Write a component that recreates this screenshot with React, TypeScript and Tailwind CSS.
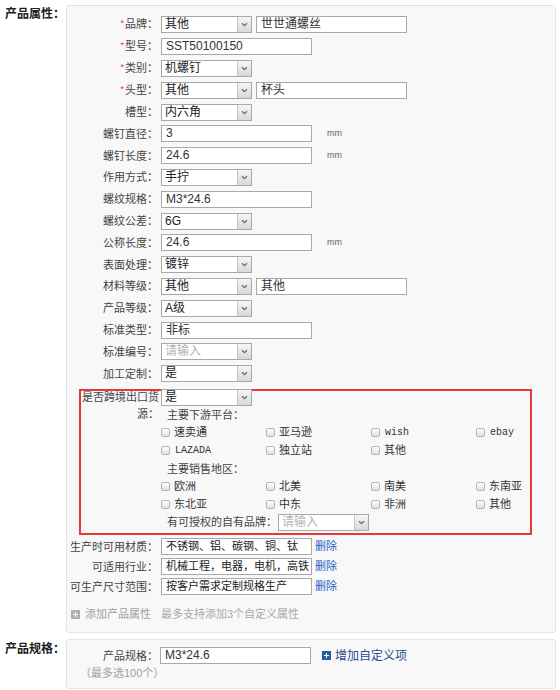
import React from "react";

const Chevron = () => (
  <svg width="7" height="5" viewBox="0 0 7 5">
    <path d="M1 1.2 L3.5 3.6 L6 1.2" fill="none" stroke="#6b6b6b" strokeWidth="1.3" />
  </svg>
);

function Sel({ value, placeholder }: { value: string; placeholder?: boolean }) {
  return (
    <div className="flex h-[17px] w-[91px] shrink-0 items-stretch border border-[#a8a8a8] bg-white">
      <span
        className={
          placeholder
            ? "flex-1 pl-[3px] text-[12px] leading-[15px] text-[#b3b3b3] whitespace-nowrap overflow-hidden"
            : "flex-1 pl-[3px] text-[12px] leading-[15px] text-[#222] whitespace-nowrap overflow-hidden"
        }
      >
        {value}
      </span>
      <span className="flex w-[14px] items-center justify-center border-l border-[#c4c4c4] bg-gradient-to-b from-[#f6f6f6] to-[#d8d8d8]">
        <Chevron />
      </span>
    </div>
  );
}

function Inp({ value, small }: { value: string; small?: boolean }) {
  return (
    <div
      className={
        small
          ? "h-[17px] w-[151px] shrink-0 overflow-hidden whitespace-nowrap border border-[#a8a8a8] bg-white pl-[4px] text-[11px] leading-[15px] text-[#222]"
          : "h-[17px] w-[151px] shrink-0 overflow-hidden whitespace-nowrap border border-[#a8a8a8] bg-white pl-[4px] text-[12px] leading-[15px] text-[#333]"
      }
    >
      {value}
    </div>
  );
}

function Row({ label, req, children }: { label: string; req?: boolean; children: React.ReactNode }) {
  return (
    <div className="flex h-[21.8px] items-center">
      <div className="w-[91px] shrink-0 text-right text-[11px] leading-[14px] text-[#444]">
        {req && <span className="relative top-[-2px] mr-[1px] text-[9px] text-[#e4393c]">*</span>}
        {label}：
      </div>
      <div className="ml-[3px] flex items-center">{children}</div>
    </div>
  );
}

const Mm = () => <span className="ml-[15px] text-[9px] text-[#666]">mm</span>;

function Cb({ label, latin }: { label: string; latin?: boolean }) {
  return (
    <div className="flex h-[18px] items-center">
      <span className="h-[9px] w-[9px] rounded-[2px] border border-[#b5b5b5] bg-gradient-to-b from-white to-[#e0e0e0]" />
      {latin ? (
        <span className="ml-[5px] font-['Liberation_Mono',monospace] text-[10px] text-[#333]">{label}</span>
      ) : (
        <span className="ml-[4px] text-[11px] text-[#333]">{label}</span>
      )}
    </div>
  );
}

function DelRow({ label, value }: { label: string; value: string }) {
  return (
    <div className="flex h-[20px] items-center">
      <div className="w-[91px] shrink-0 text-right text-[11px] leading-[14px] text-[#444]">{label}：</div>
      <div className="ml-[3px] flex items-center">
        <Inp value={value} small />
        <span className="ml-[3px] text-[11px] text-[#2a62c9]">删除</span>
      </div>
    </div>
  );
}

export default function App() {
  return (
    <div className="h-[690px] w-[560px] overflow-hidden bg-white font-['Liberation_Sans','Noto_Sans_CJK_SC',sans-serif] text-[#333]">
      {/* Section 1 */}
      <div className="flex pt-[5px]">
        <div className="w-[66px] shrink-0 pl-[5px] pt-[1px] text-[12px] font-bold leading-[16px] text-[#222]">产品属性：</div>
        <div className="w-[490px] rounded-[3px] border border-[#e4e4e4] bg-[#f8f8f8] pb-[7px] pt-[8px]">
          <Row label="品牌" req>
            <Sel value="其他" />
            <div className="ml-[4px]">
              <Inp value="世世通螺丝" />
            </div>
          </Row>
          <Row label="型号" req>
            <Inp value="SST50100150" />
          </Row>
          <Row label="类别" req>
            <Sel value="机螺钉" />
          </Row>
          <Row label="头型" req>
            <Sel value="其他" />
            <div className="ml-[4px]">
              <Inp value="杯头" />
            </div>
          </Row>
          <Row label="槽型">
            <Sel value="内六角" />
          </Row>
          <Row label="螺钉直径">
            <Inp value="3" />
            <Mm />
          </Row>
          <Row label="螺钉长度">
            <Inp value="24.6" />
            <Mm />
          </Row>
          <Row label="作用方式">
            <Sel value="手拧" />
          </Row>
          <Row label="螺纹规格">
            <Inp value="M3*24.6" />
          </Row>
          <Row label="螺纹公差">
            <Sel value="6G" />
          </Row>
          <Row label="公称长度">
            <Inp value="24.6" />
            <Mm />
          </Row>
          <Row label="表面处理">
            <Sel value="镀锌" />
          </Row>
          <Row label="材料等级">
            <Sel value="其他" />
            <div className="ml-[4px]">
              <Inp value="其他" />
            </div>
          </Row>
          <Row label="产品等级">
            <Sel value="A级" />
          </Row>
          <Row label="标准类型">
            <Inp value="非标" />
          </Row>
          <Row label="标准编号">
            <Sel value="请输入" placeholder />
          </Row>
          <Row label="加工定制">
            <Sel value="是" />
          </Row>

          {/* Red box */}
          <div className="ml-[12px] mt-[4px] w-[453px] border-2 border-[#e53a3a] pb-[1px]">
            <div className="-mt-[2px] flex">
              <div className="w-[78px] shrink-0 pt-[0px] text-right text-[11px] leading-[17px] text-[#444]">是否跨境出口货源：</div>
              <div className="ml-[2px] flex-1">
                <Sel value="是" />
                <div className="h-[18px] pl-[6px] text-[11px] leading-[18px] text-[#444]">主要下游平台：</div>
                <div className="grid grid-cols-[105px_105px_105px_105px]">
                  <Cb label="速卖通" />
                  <Cb label="亚马逊" />
                  <Cb label="wish" latin />
                  <Cb label="ebay" latin />
                  <Cb label="LAZADA" latin />
                  <Cb label="独立站" />
                  <Cb label="其他" />
                </div>
                <div className="h-[18px] pl-[6px] text-[11px] leading-[18px] text-[#444]">主要销售地区：</div>
                <div className="grid grid-cols-[105px_105px_105px_105px]">
                  <Cb label="欧洲" />
                  <Cb label="北美" />
                  <Cb label="南美" />
                  <Cb label="东南亚" />
                  <Cb label="东北亚" />
                  <Cb label="中东" />
                  <Cb label="非洲" />
                  <Cb label="其他" />
                </div>
                <div className="flex h-[18px] items-center pl-[6px]">
                  <span className="text-[11px] text-[#444]">有可授权的自有品牌：</span>
                  <div className="ml-[1px]">
                    <Sel value="请输入" placeholder />
                  </div>
                </div>
              </div>
            </div>
          </div>

          <div className="mt-[2px]">
            <DelRow label="生产时可用材质" value="不锈钢、铝、碳钢、铜、钛" />
            <DelRow label="可适用行业" value="机械工程，电器，电机，高铁" />
            <DelRow label="可生产尺寸范围" value="按客户需求定制规格生产" />
          </div>

          <div className="mt-[8px] flex h-[20px] items-center">
            <div className="flex w-[94px] shrink-0 items-center pl-[4px]">
              <span className="relative flex h-[9px] w-[9px] items-center justify-center bg-[#b0b0b0]">
                <span className="absolute h-[1px] w-[5px] bg-white" />
                <span className="absolute h-[5px] w-[1px] bg-white" />
              </span>
              <span className="ml-[5px] text-[11px] text-[#a0a0a0]">添加产品属性</span>
            </div>
            <span className="text-[11px] text-[#a8a8a8]">最多支持添加3个自定义属性</span>
          </div>
        </div>
      </div>

      {/* Section 2 */}
      <div className="mt-[6px] flex">
        <div className="w-[66px] shrink-0 pl-[5px] pt-[2px] text-[12px] font-bold leading-[16px] text-[#222]">产品规格：</div>
        <div className="h-[50px] w-[490px] rounded-[3px] border border-[#e4e4e4] bg-[#f8f8f8] pt-[6px]">
          <div className="flex h-[20px] items-center">
            <div className="w-[91px] shrink-0 text-right text-[11px] leading-[14px] text-[#444]">产品规格：</div>
            <div className="ml-[2px] flex items-center">
              <Inp value="M3*24.6" />
              <span className="relative ml-[11px] flex h-[9px] w-[9px] items-center justify-center bg-[#2c5aa0]">
                <span className="absolute h-[1px] w-[5px] bg-white" />
                <span className="absolute h-[5px] w-[1px] bg-white" />
              </span>
              <span className="ml-[4px] text-[12px] text-[#2a4d8f]">增加自定义项</span>
            </div>
          </div>
          <div className="pl-[13px] text-[11px] leading-[14px] text-[#a0a0a0]">（最多选100个）</div>
        </div>
      </div>
    </div>
  );
}
